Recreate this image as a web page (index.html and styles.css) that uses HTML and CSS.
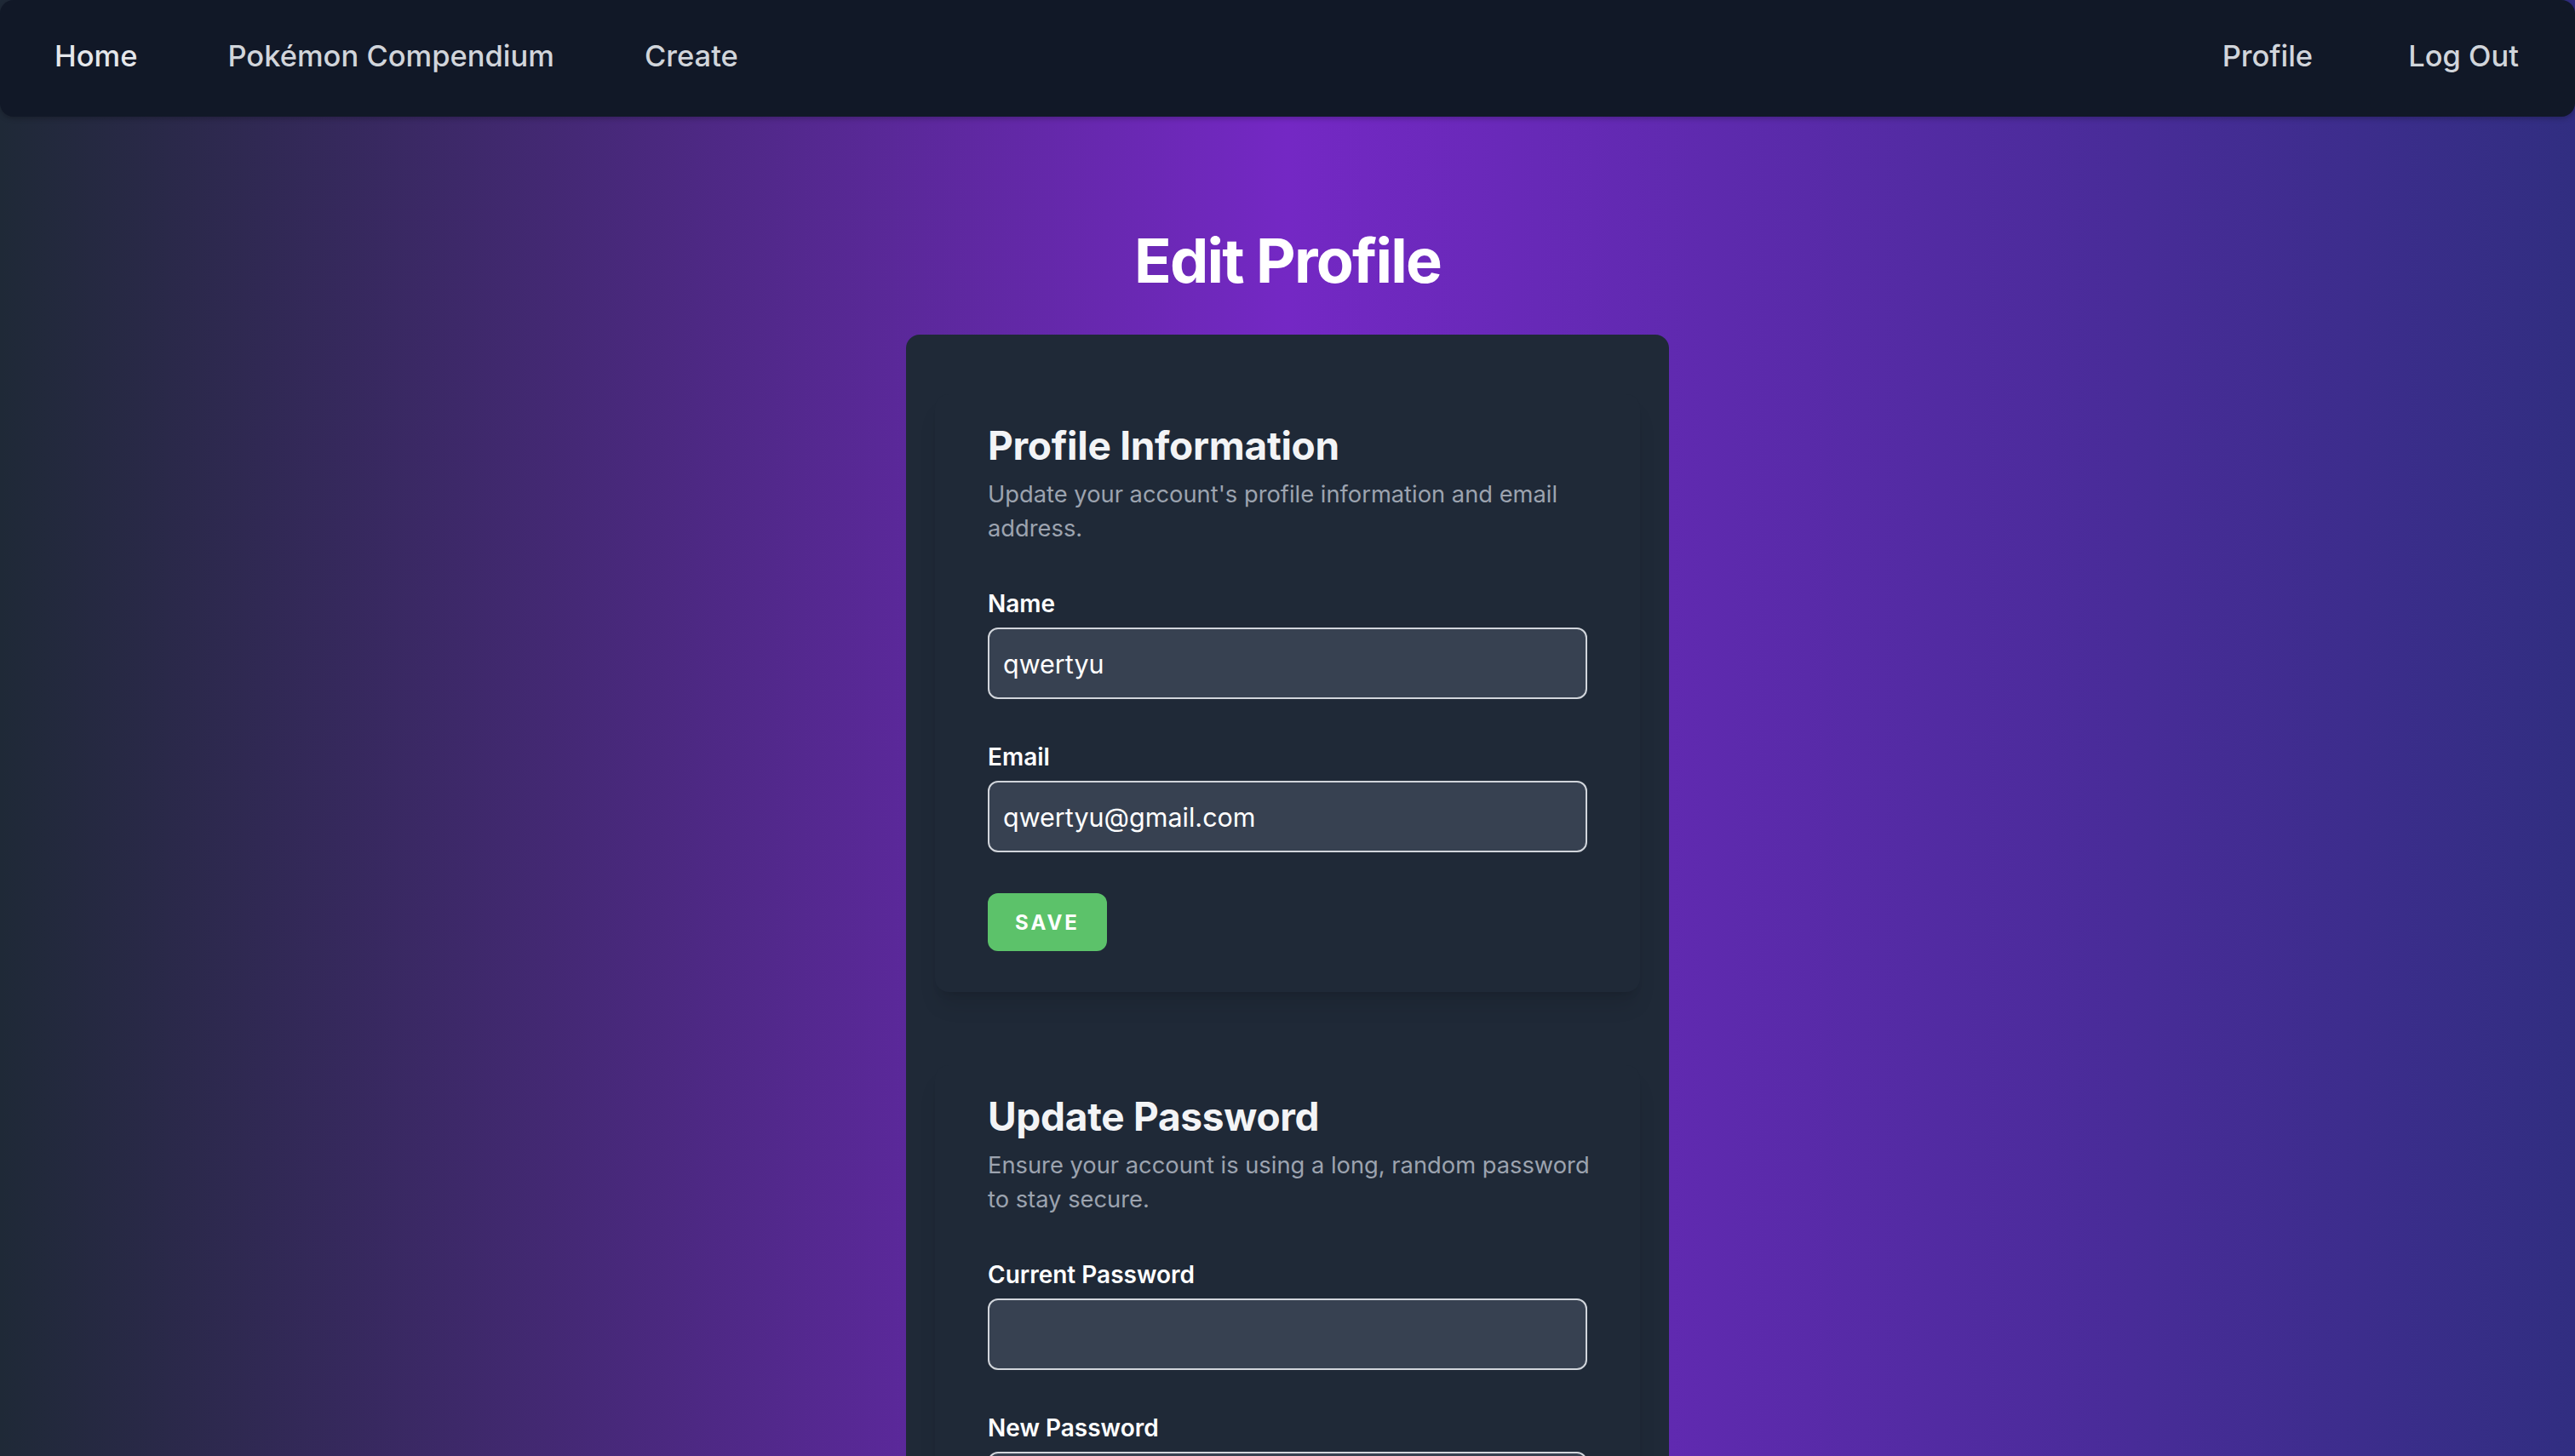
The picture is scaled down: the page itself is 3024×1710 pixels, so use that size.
FILE: index.html
```html
<!DOCTYPE html>
<html lang="en">
<head>
<meta charset="utf-8">
<title>Edit Profile</title>
<link rel="stylesheet" href="styles.css">
</head>
<body>
<nav class="topbar">
  <div class="nav-group nav-left">
    <a class="nav-link nav-active" href="#">Home</a>
    <a class="nav-link" href="#">Pokémon Compendium</a>
    <a class="nav-link" href="#">Create</a>
  </div>
  <div class="nav-group nav-right">
    <a class="nav-link" href="#">Profile</a>
    <a class="nav-link" href="#">Log Out</a>
  </div>
</nav>

<main class="page">
  <h1 class="page-title">Edit Profile</h1>

  <div class="card">
    <section class="panel">
      <h2 class="panel-title">Profile Information</h2>
      <p class="panel-desc">Update your account's profile information and email address.</p>
      <form class="form">
        <label class="field-label" for="name">Name</label>
        <input class="field-input" id="name" type="text" value="qwertyu">
        <label class="field-label field-gap" for="email">Email</label>
        <input class="field-input" id="email" type="email" value="qwertyu@gmail.com">
        <button class="btn-save" type="button">Save</button>
      </form>
    </section>

    <section class="panel panel-next">
      <h2 class="panel-title">Update Password</h2>
      <p class="panel-desc">Ensure your account is using a long, random password to stay secure.</p>
      <form class="form">
        <label class="field-label" for="cur">Current Password</label>
        <input class="field-input" id="cur" type="password">
        <label class="field-label field-gap" for="new">New Password</label>
        <input class="field-input" id="new" type="password">
        <label class="field-label field-gap" for="conf">Confirm Password</label>
        <input class="field-input" id="conf" type="password">
        <button class="btn-save" type="button">Save</button>
      </form>
    </section>

    <section class="panel panel-next">
      <h2 class="panel-title">Delete Account</h2>
      <p class="panel-desc">Once your account is deleted, all of its resources and data will be permanently deleted.</p>
      <form class="form">
        <button class="btn-delete" type="button">Delete Account</button>
      </form>
    </section>
  </div>
</main>
</body>
</html>
```

FILE: styles.css
```css
* {
  box-sizing: border-box;
}

html {
  background: linear-gradient(to right, #1f2937 0%, #7428c4 50%, #312e81 100%);
  min-height: 100%;
}

body {
  margin: 0;
  font-family: "Inter", "Noto Sans", sans-serif;
  color: #f3f4f6;
  min-height: 100vh;
  padding-bottom: 120px;
}

.topbar {
  display: flex;
  justify-content: space-between;
  align-items: center;
  height: 137px;
  padding: 0 66px 6px 64px;
  background: #111827;
  border-radius: 16px;
  box-shadow: 0 2px 6px rgba(0, 0, 0, 0.25);
}

.nav-group {
  display: flex;
  align-items: center;
}

.nav-left {
  gap: 106px;
}

.nav-right {
  gap: 112px;
}

.nav-link {
  font-size: 34.5px;
  font-weight: 500;
  color: #d1d5db;
  text-decoration: none;
}

.nav-active {
  color: #e5e7eb;
}

.page {
  display: flex;
  flex-direction: column;
  align-items: center;
}

.page-title {
  margin: 129px 0 0;
  font-size: 72px;
  line-height: 80px;
  font-weight: 700;
  color: #ffffff;
  letter-spacing: -1.8px;
}

.card {
  width: 896px;
  margin-top: 47px;
  padding: 70px 34px 80px;
  background: #1f2937;
  border-radius: 16px;
}

.panel {
  padding: 32px 62px 48px;
  background: #1f2937;
  border-radius: 16px;
  box-shadow: 0 20px 25px -5px rgba(0, 0, 0, 0.1), 0 8px 10px -6px rgba(0, 0, 0, 0.1);
}

.panel-next {
  margin-top: 86px;
}

.panel-title {
  margin: 0;
  font-size: 46px;
  line-height: 56px;
  font-weight: 700;
  color: #f3f4f6;
  letter-spacing: -0.3px;
}

.panel-desc {
  margin: 10px -16px 0 0;
  font-size: 27.3px;
  line-height: 40px;
  color: #9ca3af;
}

.form {
  display: flex;
  flex-direction: column;
  align-items: flex-start;
  margin-top: 48px;
}

.field-label {
  font-size: 28px;
  line-height: 40px;
  font-weight: 600;
  color: #ffffff;
}

.field-gap {
  margin-top: 48px;
}

.field-input {
  width: 100%;
  height: 84px;
  margin-top: 8px;
  padding: 0 16px;
  background: #374151;
  border: 2px solid #d1d5db;
  border-radius: 12px;
  font-family: "Inter", "Noto Sans", sans-serif;
  font-size: 30.5px;
  color: #ffffff;
  outline: none;
}

.btn-save {
  margin-top: 48px;
  width: 140px;
  height: 68px;
  padding: 0;
  background: #5cc26a;
  border: none;
  border-radius: 12px;
  font-family: "Inter", "Noto Sans", sans-serif;
  font-size: 24px;
  font-weight: 700;
  letter-spacing: 3px;
  text-transform: uppercase;
  color: #ffffff;
}

.btn-delete {
  height: 68px;
  padding: 0 32px;
  background: #dc2626;
  border: none;
  border-radius: 12px;
  font-family: "Inter", "Noto Sans", sans-serif;
  font-size: 24px;
  font-weight: 700;
  letter-spacing: 3px;
  text-transform: uppercase;
  color: #ffffff;
}
```
